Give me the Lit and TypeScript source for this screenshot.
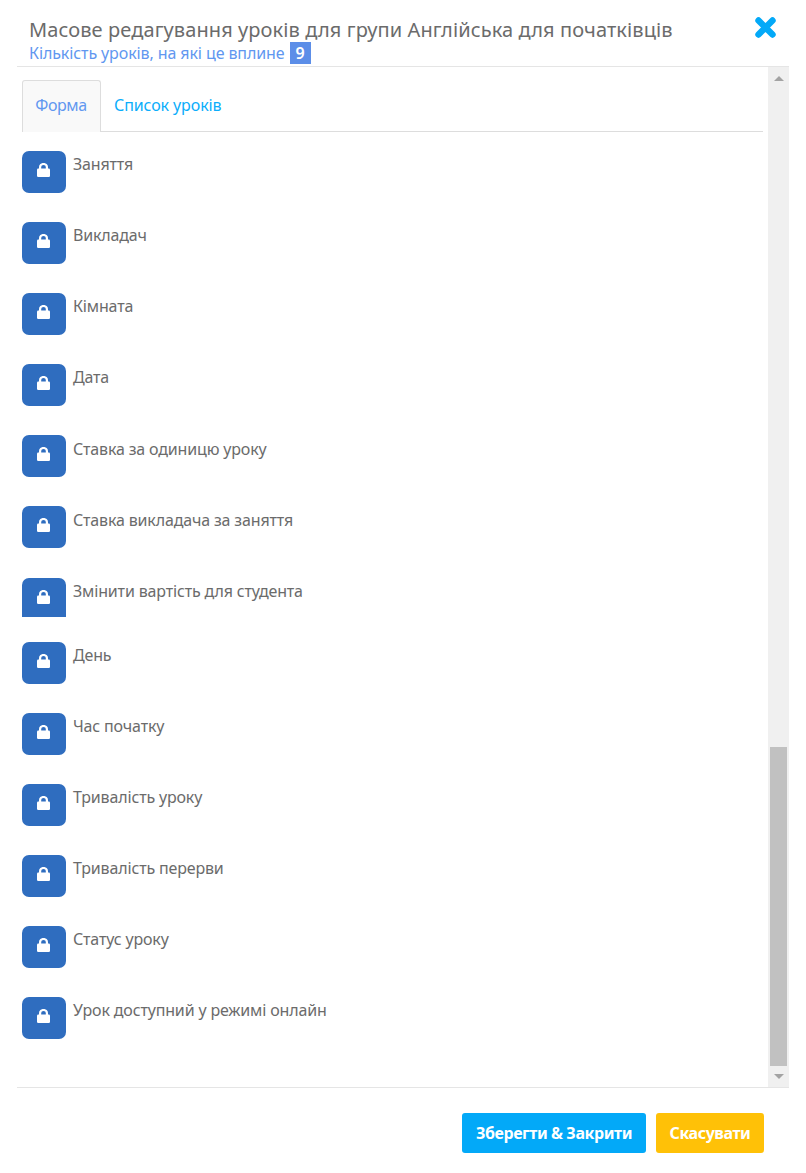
import { LitElement, html, css, svg } from "lit";
import { customElement } from "lit/decorators.js";

const FIELDS = [
  "Заняття",
  "Викладач",
  "Кімната",
  "Дата",
  "Ставка за одиницю уроку",
  "Ставка викладача за заняття",
  "Змінити вартість для студента",
  "День",
  "Час початку",
  "Тривалість уроку",
  "Тривалість перерви",
  "Статус уроку",
  "Урок доступний у режимі онлайн",
];

const lockIcon = svg`<svg class="lock" viewBox="0 0 13 14" width="13" height="14">
  <path d="M3.1 7V4a3.4 3 0 0 1 6.8 0V7" fill="none" stroke="#fff" stroke-width="2.2" />
  <rect x="0" y="5.6" width="13" height="8.4" rx="1.2" fill="#fff" />
</svg>`;

@customElement("app-root")
export class AppRoot extends LitElement {
  static override styles = css`
    :host {
      display: block;
      width: 806px;
      height: 1173px;
      background: #fff;
      font-family: "Noto Sans", sans-serif;
      color: #666;
      overflow: hidden;
    }

    .dialog {
      display: flex;
      flex-direction: column;
      height: 1173px;
      padding: 0 17px;
      box-sizing: border-box;
    }

    .header {
      box-sizing: border-box;
      padding: 16px 12px 0;
      border-bottom: 1px solid #e5e5e5;
      flex: none;
      position: relative;
      height: 67px;
    }

    .title {
      margin: 0;
      font-size: 20px;
      line-height: 27px;
      font-weight: 400;
      letter-spacing: 0.1px;
      color: #6b6b6b;
      white-space: nowrap;
    }

    .subtitle {
      display: flex;
      align-items: center;
      gap: 5px;
      height: 22px;
      margin-top: -1px;
      font-size: 16px;
      letter-spacing: -0.1px;
      color: #6197f0;
      white-space: nowrap;
    }

    .count {
      width: 21px;
      height: 22px;
      line-height: 22px;
      text-align: center;
      background: #5c8ee8;
      color: #fff;
      font-weight: 600;
      letter-spacing: 0;
    }

    .close {
      position: absolute;
      left: 738px;
      top: 17px;
      display: block;
    }

    .body {
      flex: none;
      height: 1020px;
      display: flex;
    }

    .content {
      flex: 1;
      min-width: 0;
      padding: 13px 5px 0;
    }

    .tabs {
      display: flex;
      height: 52px;
      box-sizing: border-box;
      border-bottom: 1px solid #ddd;
      margin-bottom: 18.78px;
    }

    .tab {
      height: 50px;
      box-sizing: border-box;
      padding: 0 13px;
      display: flex;
      align-items: center;
      font-size: 16px;
      letter-spacing: -0.1px;
      color: #0badfb;
      white-space: nowrap;
    }

    .tab.active {
      width: 79px;
      height: 52px;
      padding: 0 1px 4px 0;
      justify-content: center;
      background: #f9f9f9;
      border: 1px solid #ddd;
      border-bottom: 0;
      border-radius: 3px 3px 0 0;
      letter-spacing: -0.4px;
      color: #6197f0;
    }

    .row {
      display: flex;
      gap: 7px;
      height: 42px;
      margin-bottom: 29.14px;
    }

    .row.cut {
      height: 39px;
      margin-bottom: 25px;
    }

    .badge {
      width: 44px;
      height: 42px;
      flex: none;
      display: flex;
      align-items: center;
      justify-content: center;
      padding: 0 1px 4px 0;
      box-sizing: border-box;
      background: #2f6dbf;
      border-radius: 7px;
    }

    .cut .badge {
      height: 39px;
      padding: 0 1px 1px 0;
      border-radius: 7px 7px 0 0;
    }

    .label {
      padding-top: 0.32px;
      font-size: 16px;
      line-height: 26px;
      letter-spacing: -0.16px;
      color: #6b6b6b;
      white-space: nowrap;
    }

    .scrollbar {
      flex: none;
      width: 21px;
      background: #f0f0f0;
      display: flex;
      flex-direction: column;
      align-items: center;
      justify-content: space-between;
      position: relative;
      padding: 9px 0 8px;
      box-sizing: border-box;
    }

    .arrow-up,
    .arrow-down {
      width: 0;
      height: 0;
      border-left: 5px solid transparent;
      border-right: 5px solid transparent;
    }

    .arrow-up {
      border-bottom: 5px solid #a3a3a3;
    }

    .arrow-down {
      border-top: 5px solid #a3a3a3;
    }

    .thumb {
      position: absolute;
      left: 2px;
      top: 680px;
      width: 17px;
      height: 319px;
      background: #c1c1c1;
    }

    .footer {
      flex: none;
      border-top: 1px solid #e5e5e5;
      display: flex;
      justify-content: flex-end;
      gap: 10px;
      padding: 25px 25px 0 0;
    }

    .btn {
      height: 40px;
      box-sizing: border-box;
      display: flex;
      align-items: center;
      justify-content: center;
      border: 0;
      border-radius: 3px;
      color: #fff;
      font-family: inherit;
      font-size: 16px;
      font-weight: 700;
      letter-spacing: -0.42px;
      white-space: nowrap;
    }

    .save {
      width: 184px;
      background: #03a9f8;
    }

    .cancel {
      width: 108px;
      background: #ffc107;
    }
  `;

  override render() {
    return html`
      <div class="dialog">
        <div class="header">
          <h4 class="title">Масове редагування уроків для групи Англійська для початківців</h4>
          <div class="subtitle">
            <span>Кількість уроків, на які це вплине</span>
            <span class="count">9</span>
          </div>
          <svg class="close" viewBox="0 0 21 21" width="21" height="21">
            <path d="M3.5 3.5l14 14M17.5 3.5l-14 14" stroke="#03a9f8" stroke-width="6.4" stroke-linecap="round" />
          </svg>
        </div>
        <div class="body">
          <div class="content">
            <div class="tabs">
              <div class="tab active">Форма</div>
              <div class="tab">Список уроків</div>
            </div>
            ${FIELDS.map(
              (name, i) => html`
                <div class="row ${i === 6 ? "cut" : ""}">
                  <div class="badge">${lockIcon}</div>
                  <div class="label">${name}</div>
                </div>
              `
            )}
          </div>
          <div class="scrollbar">
            <div class="arrow-up"></div>
            <div class="thumb"></div>
            <div class="arrow-down"></div>
          </div>
        </div>
        <div class="footer">
          <button class="btn save">Зберегти &amp; Закрити</button>
          <button class="btn cancel">Скасувати</button>
        </div>
      </div>
    `;
  }
}

declare global {
  interface HTMLElementTagNameMap {
    "app-root": AppRoot;
  }
}
